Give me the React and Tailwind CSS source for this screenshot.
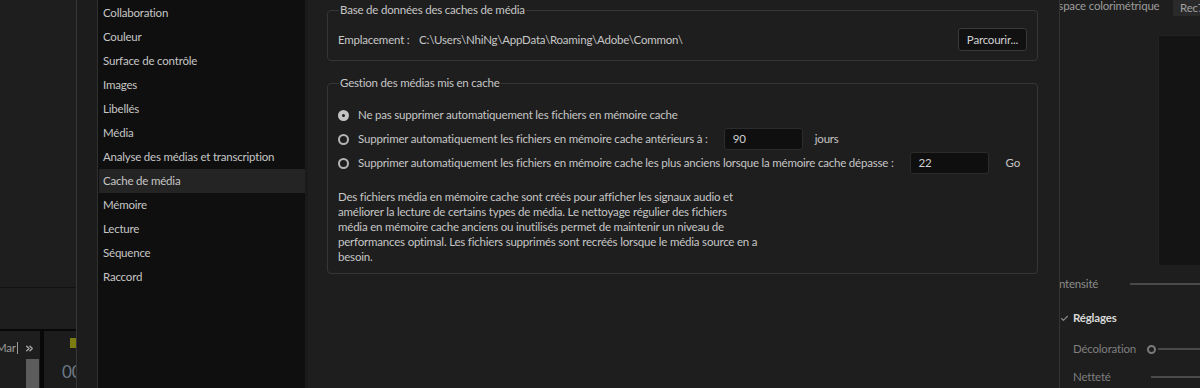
import { Check, ChevronsRight } from 'lucide-react'

const sections = [
  'Collaboration',
  'Couleur',
  'Surface de contrôle',
  'Images',
  'Libellés',
  'Média',
  'Analyse des médias et transcription',
  'Cache de média',
  'Mémoire',
  'Lecture',
  'Séquence',
  'Raccord',
]

function Radio({ checked }) {
  return checked ? (
    <span className="w-[11px] h-[11px] rounded-full bg-[#c4c4c4] flex items-center justify-center shrink-0">
      <span className="w-[3px] h-[3px] rounded-full bg-[#1e1e1e]" />
    </span>
  ) : (
    <span className="w-[11px] h-[11px] rounded-full border-2 border-[#b4b4b4] bg-[#1e1e1e] shrink-0" />
  )
}

function NumInput({ value }) {
  return (
    <div className="w-[79px] h-[22px] rounded-[3px] bg-[#0f0f0f] border border-[#2c2c2c] flex items-center px-2 text-[#d0d0d0]">
      {value}
    </div>
  )
}

export default function App() {
  return (
    <div className="w-[1200px] h-[388px] flex overflow-hidden bg-[#1e1e1e] text-[11.5px] tracking-[-0.2px] text-[#c6c6c6] leading-none" style={{ fontFamily: 'Lato, "Noto Sans", sans-serif' }}>
      {/* left dock, mostly cut off */}
      <div className="w-[77px] shrink-0 flex flex-col border-r border-[#363636]">
        <div className="h-[288px] bg-[#1e1e1e] border-b border-[#121212]" />
        <div className="h-[43px] bg-[#1e1e1e] border-b-2 border-[#080808]" />
        <div className="flex-1 flex">
          <div className="w-[40px] relative bg-[#1e1e1e] overflow-hidden">
            <div className="flex items-center h-[34px] -ml-[4px]">
              <span className="text-[#9a9a9a] pr-[1px] border-r border-[#9a9a9a] leading-[12px] whitespace-nowrap">Mar</span>
              <ChevronsRight className="ml-[6px] w-[11px] h-[11px] text-[#a8a8a8]" strokeWidth={3} />
            </div>
            <div className="absolute left-[26px] top-[28px] w-[13px] h-[40px] bg-[#5c5c5c]" />
          </div>
          <div className="w-[4px] bg-[#080808]" />
          <div className="flex-1 bg-[#1c1c1c] relative overflow-hidden">
            <div className="absolute right-0 top-[7px] w-[6px] h-[10px] bg-[#7d7c12]" />
            <div className="absolute left-[18px] top-[32px] text-[17px] text-[#6d7b88]">00</div>
          </div>
        </div>
      </div>

      <div className="w-[21px] shrink-0 bg-[#1c1c1c] border-r border-[#303030]" />

      {/* preferences list */}
      <div className="w-[210px] shrink-0 bg-[#0f0f0f] border-r-[3px] border-[#1a1a1a] pt-[1px]">
        {sections.map(s => (
          <div key={s} className={`h-[24px] flex items-center pl-[4px] ml-[1px] whitespace-nowrap ${s === 'Cache de média' ? 'bg-[#242424]' : ''}`}>
            {s}
          </div>
        ))}
      </div>

      {/* settings */}
      <div className="w-[751px] shrink-0 pl-[19px] pr-[21px] flex flex-col">
        <fieldset className="border border-[#363636] rounded-[4px] px-[10px] pb-[9px] mt-[2px]">
          <legend className="px-[1px] ml-[1px] h-[16px] leading-[16px]">Base de données des caches de média</legend>
          <div className="flex items-center h-[23px] mt-[10px]">
            <span className="w-[81px]">Emplacement :</span>
            <span>C:\Users\NhiNg\AppData\Roaming\Adobe\Common\</span>
            <button className="ml-auto h-[23px] px-[8px] rounded-[3px] bg-[#111111] border border-[#393939] text-[#d2d2d2]">Parcourir...</button>
          </div>
        </fieldset>

        <fieldset className="border border-[#363636] rounded-[4px] px-[10px] pb-[9px] mt-[14px]">
          <legend className="px-[1px] ml-[1px] h-[16px] leading-[16px]">Gestion des médias mis en cache</legend>
          <div className="flex flex-col mt-[12px]">
            <div className="h-[24px] flex items-center gap-[9px]">
              <Radio checked />
              <span>Ne pas supprimer automatiquement les fichiers en mémoire cache</span>
            </div>
            <div className="h-[24px] flex items-center gap-[9px]">
              <Radio />
              <span className="whitespace-nowrap">Supprimer automatiquement les fichiers en mémoire cache antérieurs à :</span>
              <div className="ml-[7px]"><NumInput value="90" /></div>
              <span className="ml-[3px]">jours</span>
            </div>
            <div className="h-[24px] flex items-center gap-[9px]">
              <Radio />
              <span className="whitespace-nowrap">Supprimer automatiquement les fichiers en mémoire cache les plus anciens lorsque la mémoire cache dépasse :</span>
              <div className="ml-[7px]"><NumInput value="22" /></div>
              <span className="ml-[8px]">Go</span>
            </div>
          </div>
          <p className="mt-[14px] leading-[15px] whitespace-nowrap">
            Des fichiers média en mémoire cache sont créés pour afficher les signaux audio et<br />
            améliorer la lecture de certains types de média. Le nettoyage régulier des fichiers<br />
            média en mémoire cache anciens ou inutilisés permet de maintenir un niveau de<br />
            performances optimal. Les fichiers supprimés sont recréés lorsque le média source en a<br />
            besoin.
          </p>
        </fieldset>
      </div>

      {/* right panel, cut off */}
      <div className="flex-1 border-l border-[#343434] overflow-hidden flex flex-col">
        <div className="flex items-start h-[17px]">
          <span className="-ml-[8px] w-[113px] shrink-0 text-[#9c9c9c] whitespace-nowrap leading-[12px]">Espace colorimétrique</span>
          <span className="ml-[8px] px-[7px] h-[16px] bg-[#2a2a2a] text-[#a0a0a0] whitespace-nowrap flex items-center">Rec709</span>
        </div>
        <div className="ml-[98px] mt-[18px] h-[230px] bg-[#141414] border-l border-t border-[#222]" />
        <div className="flex items-center h-[16px] mt-[11px]">
          <span className="-ml-[4px] text-[#8c8c8c] whitespace-nowrap">Intensité</span>
          <div className="ml-[32px] flex-1 h-[2px] bg-[#4a4a4a]" />
        </div>
        <div className="flex items-center h-[16px] mt-[18px] gap-[4px]">
          <Check className="w-[9px] h-[9px] text-[#8a8a8a]" strokeWidth={3} />
          <span className="font-bold text-[#d8d8d8]">Réglages</span>
        </div>
        <div className="flex items-center h-[16px] mt-[15px] pl-[13px]">
          <span className="text-[#7e7e7e] whitespace-nowrap">Décoloration</span>
          <span className="ml-[11px] w-[9px] h-[9px] rounded-full border-2 border-[#7a7a7a]" />
          <div className="ml-[2px] flex-1 h-[2px] bg-[#4a4a4a]" />
        </div>
        <div className="flex items-center h-[16px] mt-[12px] pl-[13px]">
          <span className="text-[#7e7e7e] whitespace-nowrap">Netteté</span>
          <div className="ml-[40px] flex-1 h-[2px] bg-[#4a4a4a]" />
        </div>
      </div>
    </div>
  )
}
